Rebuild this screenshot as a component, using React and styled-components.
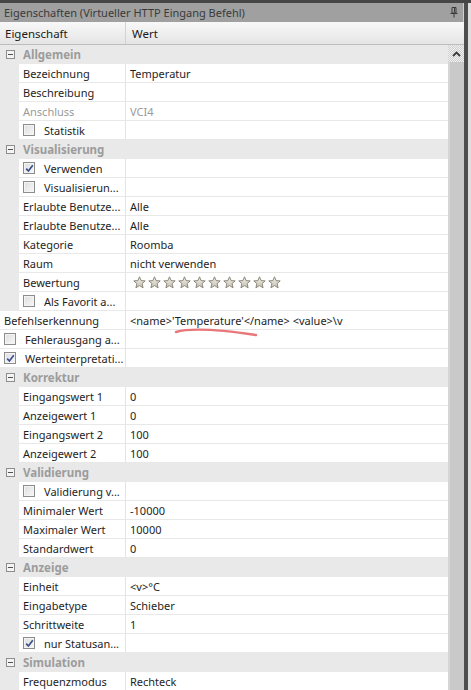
import React from 'react';
import styled, { createGlobalStyle } from 'styled-components';

const GlobalStyle = createGlobalStyle`
  html, body {
    margin: 0;
    padding: 0;
    background: #dcdcdc;
  }
  body {
    font-family: "Noto Sans", "Open Sans", sans-serif;
    font-size: 11px;
    color: #1e1e1e;
  }
  * {
    box-sizing: border-box;
  }
`;

const rows = [
  { cat: 'Allgemein' },
  { label: 'Bezeichnung', value: 'Temperatur' },
  { label: 'Beschreibung' },
  { label: 'Anschluss', value: 'VCI4', disabled: true },
  { label: 'Statistik', check: false },
  { cat: 'Visualisierung' },
  { label: 'Verwenden', check: true },
  { label: 'Visualisierun...', check: false },
  { label: 'Erlaubte Benutze...', value: 'Alle' },
  { label: 'Erlaubte Benutze...', value: 'Alle' },
  { label: 'Kategorie', value: 'Roomba' },
  { label: 'Raum', value: 'nicht verwenden' },
  { label: 'Bewertung', stars: 10 },
  { label: 'Als Favorit a...', check: false },
  { top: true, label: 'Befehlserkennung', value: "<name>'Temperature'</name> <value>\\v" },
  { top: true, label: 'Fehlerausgang a...', check: false },
  { top: true, label: 'Werteinterpretati...', check: true },
  { cat: 'Korrektur' },
  { label: 'Eingangswert 1', value: '0' },
  { label: 'Anzeigewert 1', value: '0' },
  { label: 'Eingangswert 2', value: '100' },
  { label: 'Anzeigewert 2', value: '100' },
  { cat: 'Validierung' },
  { label: 'Validierung v...', check: false },
  { label: 'Minimaler Wert', value: '-10000' },
  { label: 'Maximaler Wert', value: '10000' },
  { label: 'Standardwert', value: '0' },
  { cat: 'Anzeige' },
  { label: 'Einheit', value: '<v>°C' },
  { label: 'Eingabetype', value: 'Schieber' },
  { label: 'Schrittweite', value: '1' },
  { label: 'nur Statusan...', check: true },
  { cat: 'Simulation' },
  { label: 'Frequenzmodus', value: 'Rechteck' },
];

const Frame = styled.div`
  width: 471px;
  height: 690px;
  overflow: hidden;
  display: flex;
  flex-direction: column;
  border-top: 3px solid #464646;
`;

const Main = styled.div`
  flex: 1;
  display: flex;
  min-height: 0;
`;

const Panel = styled.div`
  width: 464px;
  display: flex;
  flex-direction: column;
  background: #fff;
`;

const DarkEdge = styled.div`
  width: 4px;
  background: #4e4e4e;
`;

const Sliver = styled.div`
  flex: 1;
  background: #dedede;
`;

const TitleBar = styled.div`
  height: 19px;
  display: flex;
  align-items: center;
  justify-content: space-between;
  padding: 0 5px 0 4px;
  background: #a0a0a0;
  color: #3a3a3a;
  font-size: 11px;
  border-right: 1px solid #cfcfcf;
`;

const Header = styled.div`
  height: 23px;
  display: flex;
  align-items: center;
  background: linear-gradient(#f8f8f8, #e5e5e5);
  border-bottom: 1px solid #bdbdbd;
  font-size: 11.5px;
  color: #1a1a1a;
`;

const HeaderCell = styled.div`
  width: ${p => p.$width ? `${p.$width}px` : 'auto'};
  flex: ${p => p.$width ? 'none' : '1'};
  height: 100%;
  display: flex;
  align-items: center;
  padding-left: ${p => p.$pad}px;
  border-right: ${p => p.$width ? '1px solid #d2d2d2' : 'none'};
`;

const Body = styled.div`
  flex: 1;
  display: flex;
  min-height: 0;
  position: relative;
`;

const Grid = styled.div`
  width: 448px;
  display: flex;
  flex-direction: column;
`;

const ScrollBar = styled.div`
  flex: 1;
  display: flex;
  flex-direction: column;
  background: #c9c9c9;
  border-left: 2px solid #d6d6d6;
`;

const ScrollButton = styled.div`
  height: 17px;
  display: flex;
  align-items: center;
  justify-content: center;
  margin-left: -2px;
  background: repeating-conic-gradient(#f0f0f0 0 25%, #d0d0d0 0 50%) 0 0 / 2px 2px;
`;

const Row = styled.div`
  height: 19px;
  flex: none;
  display: flex;
  background: ${p => p.$cat ? '#e9e9e9' : '#fff'};
`;

const Gutter = styled.div`
  width: ${p => p.$width}px;
  flex: none;
  background: #e9e9e9;
`;

const NameCell = styled.div`
  width: ${p => p.$width}px;
  flex: none;
  display: flex;
  align-items: center;
  gap: ${p => p.$gap ?? 9}px;
  padding-left: ${p => p.$pad}px;
  border-right: ${p => p.$plain ? 'none' : '1px solid #e4e4e4'};
  border-bottom: ${p => p.$plain ? 'none' : '1px solid #e8e8e8'};
  color: ${p => p.$disabled ? '#9a9a9a' : '#1e1e1e'};
  white-space: nowrap;
  overflow: hidden;
`;

const ValueCell = styled.div`
  flex: 1;
  display: flex;
  align-items: center;
  padding-left: 4px;
  border-bottom: 1px solid #e8e8e8;
  color: ${p => p.$disabled ? '#9a9a9a' : '#1e1e1e'};
  white-space: nowrap;
  overflow: hidden;
`;

const Expander = styled.div`
  width: 9px;
  height: 9px;
  margin: 0 8px 0 6px;
  border: 1px solid #8e8e8e;
  background: #f4f4f4;
  display: flex;
  align-items: center;
  justify-content: center;

  &::after {
    content: '';
    width: 5px;
    height: 1px;
    background: #505050;
  }
`;

const CatLabel = styled.span`
  font-weight: bold;
  color: #9c9c9c;
  font-size: 11.5px;
`;

const Box = styled.span`
  width: 12px;
  height: 12px;
  flex: none;
  border: 1px solid #8c8c8c;
  background: linear-gradient(135deg, #dedede, #f7f7f7);
  box-shadow: inset 0 0 0 1px #f4f4f4;
  display: flex;
  align-items: center;
  justify-content: center;
`;

const Stars = styled.div`
  display: flex;
  gap: 2px;
  padding-left: 3px;
`;

const Annotation = styled.svg`
  position: absolute;
  left: 0;
  top: 0;
  pointer-events: none;
`;

const Checkbox = ({ checked }) => (
  <Box>
    {checked && (
      <svg width="9" height="9" viewBox="0 0 9 9">
        <path d="M1.2 4.6 L3.4 7 L7.8 1.2" fill="none" stroke="#3b4f8f" strokeWidth="1.7" />
      </svg>
    )}
  </Box>
);

const Star = () => (
  <svg width="13" height="13" viewBox="0 0 13 13">
    <defs>
      <linearGradient id="sg" x1="0" y1="0" x2="0" y2="1">
        <stop offset="0" stopColor="#f2f0ea" />
        <stop offset="1" stopColor="#c6c1b3" />
      </linearGradient>
    </defs>
    <path
      d="M6.5 0.8 L8.1 4.6 L12.2 4.9 L9.1 7.6 L10.1 11.8 L6.5 9.6 L2.9 11.8 L3.9 7.6 L0.8 4.9 L4.9 4.6 Z"
      fill="url(#sg)"
      stroke="#8d887b"
      strokeWidth="1"
      strokeLinejoin="round"
    />
  </svg>
);

const Pin = () => (
  <svg width="8" height="11" viewBox="0 0 8 11">
    <path d="M2 0.5 H6 V6 H2 Z" fill="none" stroke="#3a3a3a" strokeWidth="1" />
    <path d="M4.5 1 V5.5" stroke="#3a3a3a" strokeWidth="1" />
    <path d="M0.5 6.5 H7.5" stroke="#3a3a3a" strokeWidth="1" />
    <path d="M4 7 V10.5" stroke="#3a3a3a" strokeWidth="1" />
  </svg>
);

const PropertyRow = ({ row }) => {
  if (row.cat) {
    return (
      <Row $cat>
        <NameCell $width={448} $pad={0} $gap={0} $plain>
          <Expander />
          <CatLabel>{row.cat}</CatLabel>
        </NameCell>
      </Row>
    );
  }

  const indent = row.top ? 0 : 19;
  return (
    <Row>
      {indent > 0 && <Gutter $width={indent} />}
      <NameCell $width={126 - indent} $pad={4} $disabled={row.disabled}>
        {row.check !== undefined && <Checkbox checked={row.check} />}
        <span>{row.label}</span>
      </NameCell>
      <ValueCell $disabled={row.disabled}>
        {row.stars ? (
          <Stars>
            {Array.from({ length: row.stars }).map((_, i) => <Star key={i} />)}
          </Stars>
        ) : row.value}
      </ValueCell>
    </Row>
  );
};

const App = () => {
  return (
    <>
      <GlobalStyle />
      <Frame>
        <Main>
          <Panel>
            <TitleBar>
              <span>Eigenschaften (Virtueller HTTP Eingang Befehl)</span>
              <Pin />
            </TitleBar>
            <Header>
              <HeaderCell $width={126} $pad={5}>Eigenschaft</HeaderCell>
              <HeaderCell $pad={6}>Wert</HeaderCell>
            </Header>
            <Body>
              <Grid>
                {rows.map((row, i) => <PropertyRow key={i} row={row} />)}
              </Grid>
              <ScrollBar>
                <ScrollButton>
                  <svg width="9" height="6" viewBox="0 0 9 6">
                    <path d="M1 5 L4.5 1.5 L8 5" fill="none" stroke="#3c3c3c" strokeWidth="1.8" />
                  </svg>
                </ScrollButton>
              </ScrollBar>
              {/* red marker stroke under 'Temperature' */}
              <Annotation width="448" height="300">
                <path d="M176 287 Q 196 281 256 290" fill="none" stroke="#e8777a" strokeWidth="2.4" strokeLinecap="round" />
              </Annotation>
            </Body>
          </Panel>
          <DarkEdge />
          <Sliver />
        </Main>
      </Frame>
    </>
  );
};

export default App;
